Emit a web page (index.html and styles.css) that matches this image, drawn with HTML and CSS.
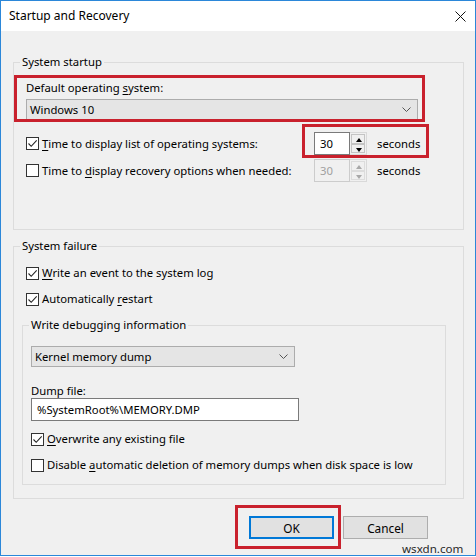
FILE: index.html
```html
<!DOCTYPE html>
<html>
<head>
<meta charset="utf-8">
<link rel="stylesheet" href="styles.css">
</head>
<body>
<div class="window">
  <div class="titlebar">
    <span class="title">Startup and Recovery</span>
    <svg class="close" width="11" height="11" viewBox="0 0 11 11"><path d="M0.5 0.5 L10.5 10.5 M10.5 0.5 L0.5 10.5" stroke="#111" stroke-width="1" fill="none"/></svg>
  </div>
  <div class="content">
    <fieldset class="group startup">
      <legend>System startup</legend>
      <div class="label first">Default operating <u>s</u>ystem:</div>
      <div class="select wide"><span>Windows 10</span><svg class="chev" width="9" height="5" viewBox="0 0 9 5"><path d="M0.5 0.5 L4.5 4.5 L8.5 0.5" stroke="#555" stroke-width="1" fill="none"/></svg></div>
      <div class="row r1">
        <div class="check col"><span class="box"><svg width="11" height="11" viewBox="0 0 11 11"><path d="M1.5 5.5 L4.2 8.3 L9.7 2.3" stroke="#222" stroke-width="1.1" fill="none"/></svg></span><span><u>T</u>ime to display list of operating systems:</span></div>
        <div class="spin">
          <div class="spin-input">30</div>
          <div class="spin-btns"><div class="sb up"></div><div class="sb down"></div></div>
        </div>
        <span class="unit">seconds</span>
      </div>
      <div class="row r2">
        <div class="check col"><span class="box"></span><span>Time to <u>d</u>isplay recovery options when needed:</span></div>
        <div class="spin disabled">
          <div class="spin-input">30</div>
          <div class="spin-btns"><div class="sb up"></div><div class="sb down"></div></div>
        </div>
        <span class="unit">seconds</span>
      </div>
    </fieldset>

    <fieldset class="group failure">
      <legend>System failure</legend>
      <div class="check crow c1"><span class="box"><svg width="11" height="11" viewBox="0 0 11 11"><path d="M1.5 5.5 L4.2 8.3 L9.7 2.3" stroke="#222" stroke-width="1.1" fill="none"/></svg></span><span><u>W</u>rite an event to the system log</span></div>
      <div class="check crow c2"><span class="box"><svg width="11" height="11" viewBox="0 0 11 11"><path d="M1.5 5.5 L4.2 8.3 L9.7 2.3" stroke="#222" stroke-width="1.1" fill="none"/></svg></span><span>Automatically <u>r</u>estart</span></div>
      <fieldset class="group debug">
        <legend>Write debugging information</legend>
        <div class="select kernel"><span>Kernel memory dump</span><svg class="chev" width="9" height="5" viewBox="0 0 9 5"><path d="M0.5 0.5 L4.5 4.5 L8.5 0.5" stroke="#555" stroke-width="1" fill="none"/></svg></div>
        <div class="label dump">Dump file:</div>
        <div class="textbox">%SystemRoot%\MEMORY.DMP</div>
        <div class="check crow c3"><span class="box"><svg width="11" height="11" viewBox="0 0 11 11"><path d="M1.5 5.5 L4.2 8.3 L9.7 2.3" stroke="#222" stroke-width="1.1" fill="none"/></svg></span><span><u>O</u>verwrite any existing file</span></div>
        <div class="check crow c4"><span class="box"></span><span>Disable <u>a</u>utomatic deletion of memory dumps when disk space is low</span></div>
      </fieldset>
    </fieldset>

    <div class="buttons">
      <div class="btn default">OK</div>
      <div class="btn">Cancel</div>
    </div>
  </div>

  <div class="mark m1"></div>
  <div class="mark m2"></div>
  <div class="mark m3"></div>
  <div class="watermark">wsxdn.com</div>
</div>
</body>
</html>
```

FILE: styles.css
```css
* { box-sizing: border-box; }
html, body { margin: 0; padding: 0; background: #fff; }
body {
  width: 476px;
  height: 557px;
  overflow: hidden;
  font-family: "Noto Sans", "Open Sans", sans-serif;
  font-size: 11.3px;
  line-height: 16px;
  color: #000;
}
u { text-decoration-thickness: 1px; text-underline-offset: 1.5px; }

.window {
  position: relative;
  width: 476px;
  height: 556px;
  border: 1px solid #2b87d9;
  background: #f0f0f0;
}

.titlebar {
  height: 30px;
  background: #fff;
  display: flex;
  align-items: center;
  justify-content: space-between;
  padding: 0 9px 0 8px;
}
.title { font-size: 12px; }
.close { margin-top: 1px; }

.content { padding: 0 12px; }

.group {
  margin: 0;
  padding: 0 12px;
  border: 1px solid #dcdcdc;
  min-width: 0;
}
.group legend {
  padding: 0 2px;
  margin-left: -6px;
  line-height: 16px;
}

.startup { margin-top: 23px; width: 451px; padding-bottom: 47px; }
.failure { margin-top: 8px; width: 451px; padding-bottom: 13px; }
.debug {
  margin: 10px 0 0 -4px;
  width: 424px;
  padding: 0 8px 11px;
}
.debug legend { margin-left: -2px; }

.label.first { margin-top: 10px; }

.select {
  height: 21px;
  border: 1px solid #acacac;
  background: #e5e5e5;
  display: flex;
  align-items: center;
  justify-content: space-between;
  padding: 0 6px 0 3px;
}
.select.wide { margin-top: 3px; width: 392px; }
.select.kernel { margin-top: 13px; width: 264px; }

.row { display: flex; align-items: center; height: 23px; }
.row.r1 { margin-top: 12px; }
.row.r2 { margin-top: 4px; }
.col { width: 288px; }

.check { display: flex; align-items: center; }
.box {
  width: 13px;
  height: 13px;
  border: 1px solid #333;
  background: #fff;
  margin-right: 3px;
  flex: none;
  display: flex;
  align-items: center;
  justify-content: center;
}
.box svg { display: block; }

.spin { display: flex; height: 23px; width: 53px; }
.spin-input {
  width: 36px;
  height: 23px;
  border: 1px solid #7a7a7a;
  background: #fff;
  padding-left: 5px;
  line-height: 21px;
}
.spin-btns {
  width: 17px;
  height: 23px;
  border: 1px solid #d9d9d9;
  border-left: none;
  padding: 1px 1px;
  display: flex;
  flex-direction: column;
  gap: 0;
}
.sb {
  flex: 1;
  border: 1px solid #c4c4c4;
  background: #f0f0f0;
  position: relative;
}
.sb::after {
  content: "";
  position: absolute;
  left: 4px;
  top: 3px;
  border-left: 3.5px solid transparent;
  border-right: 3.5px solid transparent;
}
.sb.up::after { border-bottom: 4px solid #000; }
.sb.down::after { border-top: 4px solid #000; top: 3px; }
.spin.disabled .spin-input { border-color: #cccccc; background: #f0f0f0; color: #a0a0a0; }
.spin.disabled .sb { border-color: #dcdcdc; }
.spin.disabled .sb.up::after { border-bottom-color: #a8a8a8; }
.spin.disabled .sb.down::after { border-top-color: #a8a8a8; }
.unit { margin-left: 10px; }

.crow { height: 16px; }
.c1 { margin-top: 11px; }
.c2 { margin-top: 10px; }
.c3 { margin-top: 10px; }
.c4 { margin-top: 10px; }

.label.dump { margin-top: 16px; height: 15px; }
.textbox {
  width: 268px;
  height: 23px;
  border: 1px solid #7a7a7a;
  background: #fff;
  padding-left: 5px;
  line-height: 21px;
}

.buttons {
  display: flex;
  gap: 9px;
  margin-top: 17px;
  padding-left: 236px;
}
.btn {
  width: 85px;
  height: 23px;
  border: 1px solid #adadad;
  background: #e1e1e1;
  display: flex;
  align-items: center;
  justify-content: center;
  font-size: 11.8px;
}
.btn.default { border: 2px solid #0078d7; }

.mark {
  position: absolute;
  border: 3px solid #c9212d;
}
.m1 { left: 13px; top: 74px; width: 411px; height: 47px; }
.m2 { left: 301px; top: 123px; width: 127px; height: 34px; }
.m3 { left: 234px; top: 504px; width: 106px; height: 44px; }

.watermark {
  position: absolute;
  left: 401px;
  top: 540px;
  font-size: 11.6px;
  color: #2a2a2a;
}
```
